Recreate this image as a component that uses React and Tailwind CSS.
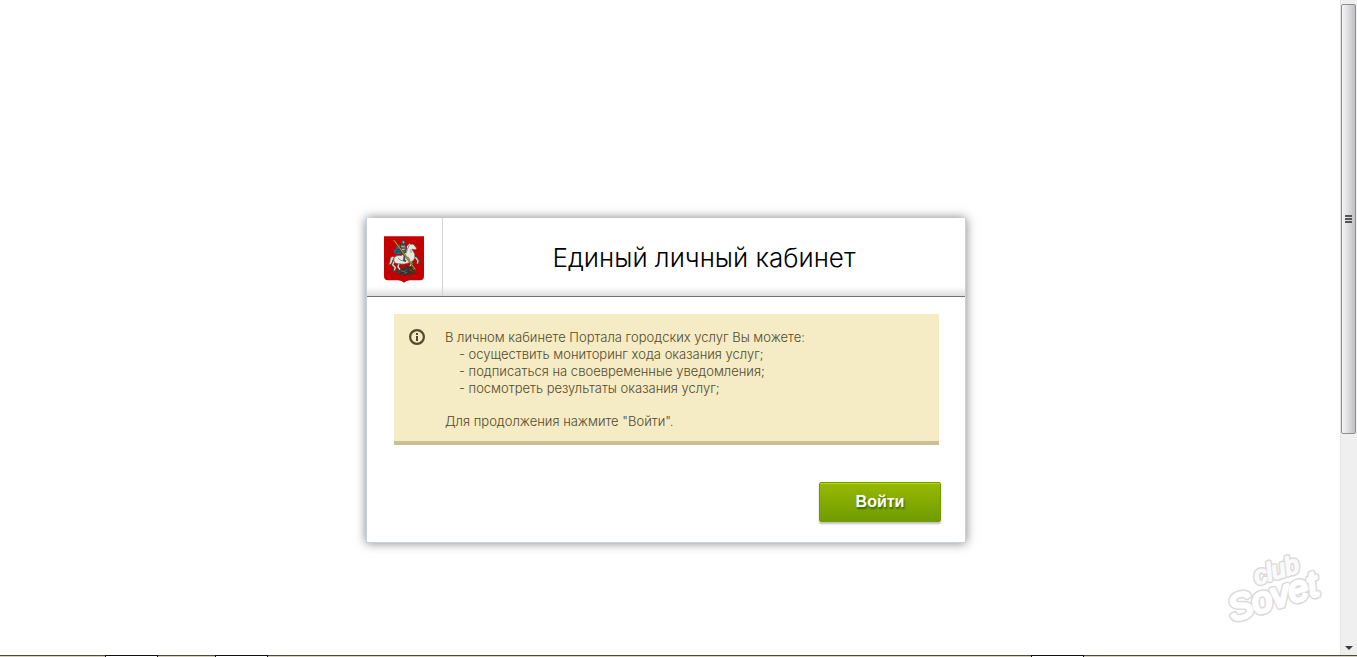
import React from 'react';

const features = [
  'осуществить мониторинг хода оказания услуг;',
  'подписаться на своевременные уведомления;',
  'посмотреть результаты оказания услуг;',
];

// Moscow coat of arms
function CoatOfArms() {
  return (
    <svg viewBox="0 0 120 140" className="w-10 h-[47px]" role="img" aria-label="Герб Москвы">
      <path d="M0 0h120v120q0 12-12 12H78q-12 0-18 8-6-8-18-8H12q-12 0-12-12z" fill="#c40000" />
      {/* dragon */}
      <path
        d="M38 106l12-12 10 2 6-8 10 4 10-2 8 8-4 8 6 8-12-2-4 6-8-4-10 6-6-6-10 4-2-8-8 2z"
        fill="#3b302a"
      />
      <path d="M50 104l12 2 6-6M78 100l6 6M60 112l10-4M86 96l4 6" stroke="#8f8577" strokeWidth="2" fill="none" />
      {/* tail and back legs */}
      <path d="M32 62q-14-4-14 10 0 10-6 14 14 0 14-12z" fill="#ddd8cf" stroke="#4a3f38" strokeWidth="2" />
      <path
        d="M30 72l-6 14 8 8-4 10 10 2M44 78l-4 14 6 8-2 12"
        stroke="#4a3f38"
        strokeWidth="7"
        fill="none"
      />
      <path
        d="M32 72l-6 14 8 8-3 8M46 78l-4 14 6 8"
        stroke="#ddd8cf"
        strokeWidth="4"
        fill="none"
      />
      {/* front legs */}
      <path d="M82 64l16 0 7 10-3 12M78 72l8 10-6 10" stroke="#4a3f38" strokeWidth="7" fill="none" />
      <path d="M80 64l16 1 6 9-2 8M76 72l7 10-5 7" stroke="#ddd8cf" strokeWidth="4" fill="none" />
      {/* horse body, neck and head */}
      <path
        d="M30 64q8-8 22-6l12-10 4-18 8-8 4 2 8 0 10 12-3 5-11-2 8 14q4 20-14 26-18 8-34 4-18 0-14-19z"
        fill="#e9e6e0"
        stroke="#5b5048"
        strokeWidth="2"
      />
      <path d="M76 26l-6 14-4 12M80 40l2 10M72 62l6 10M42 66q8 10 20 8" stroke="#93897d" strokeWidth="3" fill="none" />
      {/* cape */}
      <path d="M48 24l-10 4-2 10-8 6 4 8 16 2 10-6 2-20z" fill="#1f6f8f" />
      <path d="M36 42l12-4M34 48l14-2" stroke="#123f58" strokeWidth="3" />
      {/* rider */}
      <path d="M50 24h14l4 12-4 14-12 2-4-14z" fill="#5d5f61" stroke="#2b2b2b" strokeWidth="2" />
      <path d="M52 30l10 2M52 40l10 0" stroke="#b5b8ba" strokeWidth="3" />
      <path d="M52 12q4-6 10 0l2 8-6 6-6-4z" fill="#484b4e" />
      <path d="M56 16h5v5h-5z" fill="#c9b49c" />
      <path d="M54 50l8 8-2 14 6 4" stroke="#39516b" strokeWidth="6" fill="none" />
      {/* spear */}
      <path d="M30 12l64 88" stroke="#5e4712" strokeWidth="5" />
      <path d="M30 12l64 88" stroke="#cf9c2c" strokeWidth="3" />
    </svg>
  );
}

function InfoIcon() {
  return (
    <svg viewBox="0 0 16 16" className="w-4 h-4 shrink-0" fill="none" aria-hidden="true">
      <circle cx="8" cy="8" r="6.9" stroke="#544a2a" strokeWidth="2.2" />
      <path d="M7 4h2v2H7zM7 7h2v5H7z" fill="#544a2a" />
    </svg>
  );
}

function Watermark() {
  return (
    <svg
      viewBox="0 0 120 88"
      className="absolute right-1 bottom-6 w-[120px] h-[88px]"
      fontFamily="'Liberation Sans', Arial, sans-serif"
      fontStyle="italic"
      strokeLinejoin="round"
      strokeLinecap="round"
      role="img"
      aria-label="club Sovet"
    >
      <g transform="rotate(-17 54 44)">
        <text x="8" y="66" fontSize="36" fill="#dadada" stroke="#dadada" strokeWidth="6">
          Sovet
        </text>
        <text x="8" y="66" fontSize="36" fill="#fff" stroke="#fff" strokeWidth="3" aria-hidden="true">
          Sovet
        </text>
        <text x="42" y="38" fontSize="25" fill="#dadada" stroke="#dadada" strokeWidth="5">
          club
        </text>
        <text x="42" y="38" fontSize="25" fill="#fafafa" stroke="#fafafa" strokeWidth="2" aria-hidden="true">
          club
        </text>
      </g>
    </svg>
  );
}

function Scrollbar() {
  return (
    <div className="flex flex-col w-[17px] shrink-0 pt-1 bg-[#efefef] border-l border-[#e4e4e4]" aria-hidden="true">
      <div className="h-[66%] mr-px flex flex-col items-center justify-center gap-px rounded-xs border border-[#8e8e8e] bg-linear-to-r from-[#f6f6f6] via-[#dcdcde] to-[#bfc0c4]">
        <span className="w-[7px] h-0.5 bg-[#555]" />
        <span className="w-[7px] h-0.5 bg-[#555]" />
        <span className="w-[7px] h-0.5 bg-[#555]" />
      </div>
      <div className="flex-1 flex items-end justify-center pb-[5px]">
        <svg viewBox="0 0 8 4" className="w-2 h-1">
          <path d="M0 0h8L4 4z" fill="#3a3a3a" />
        </svg>
      </div>
    </div>
  );
}

// Top edge of the taskbar
function Taskbar() {
  return (
    <div className="flex h-0.5 border-t border-[#4d4a40] bg-[#d8d2bd]" aria-hidden="true">
      <div className="w-[106px]" />
      <div className="w-[51px] bg-white outline outline-[#111]" />
      <div className="w-[59px]" />
      <div className="w-[51px] bg-white outline outline-[#111]" />
      <div className="flex-1" />
      <div className="w-[51px] bg-white outline outline-[#111]" />
      <div className="w-[274px]" />
    </div>
  );
}

export default function App() {
  return (
    <div className="flex flex-col min-h-screen bg-white font-['Liberation_Sans',Arial,sans-serif]">
      <div className="flex flex-1">
        <main className="relative flex-1 px-4 pt-[218px] pr-6">
          <section className="mx-auto max-w-[600px] bg-white border border-t-0 border-[#c5d3da] shadow-[0_0_10px_rgba(0,0,0,0.5)]">
            <header className="flex h-[79px] border-b border-[#6f7274] bg-linear-to-t from-[#dedede] via-white via-12% to-white">
              <div className="flex items-center justify-center w-19 pt-1 pr-0.5 border-r border-[#d4d4d4]">
                <CoatOfArms />
              </div>
              <h1 className="flex-1 self-center pt-0.5 text-center text-[26px] leading-8 font-light text-black font-[Inter,'Liberation_Sans',sans-serif]">
                Единый личный кабинет
              </h1>
            </header>
            <div className="pt-[17px] pb-5 pl-[27px] pr-6">
              <div className="flex gap-5 mr-0.5 pt-[15px] pb-[11px] px-[15px] bg-[#f5ebc5] border-b-4 border-[#cbc095]">
                <InfoIcon />
                <div className="text-[13px] leading-[17px] font-light text-[#544a2a] font-[Inter,'Liberation_Sans',sans-serif]">
                  <p>В личном кабинете Портала городских услуг Вы можете:</p>
                  <ul className="pl-[14px]">
                    {features.map((text) => (
                      <li key={text}>- {text}</li>
                    ))}
                  </ul>
                  <p className="pt-4">Для продолжения нажмите "Войти".</p>
                </div>
              </div>
              <div className="flex justify-end pt-[37px]">
                <button
                  type="button"
                  className="w-[122px] h-10 rounded-xs border border-[#6f9a00] bg-linear-to-b from-[#97b900] to-[#719c00] text-base font-bold text-white text-shadow-[1px_2px_2px_rgba(0,60,0,0.6)] shadow-[inset_0_1px_0_#b9d800,0_2px_2px_rgba(0,0,0,0.25)] cursor-pointer"
                >
                  Войти
                </button>
              </div>
            </div>
          </section>
          <Watermark />
        </main>
        <Scrollbar />
      </div>
      <Taskbar />
    </div>
  );
}
